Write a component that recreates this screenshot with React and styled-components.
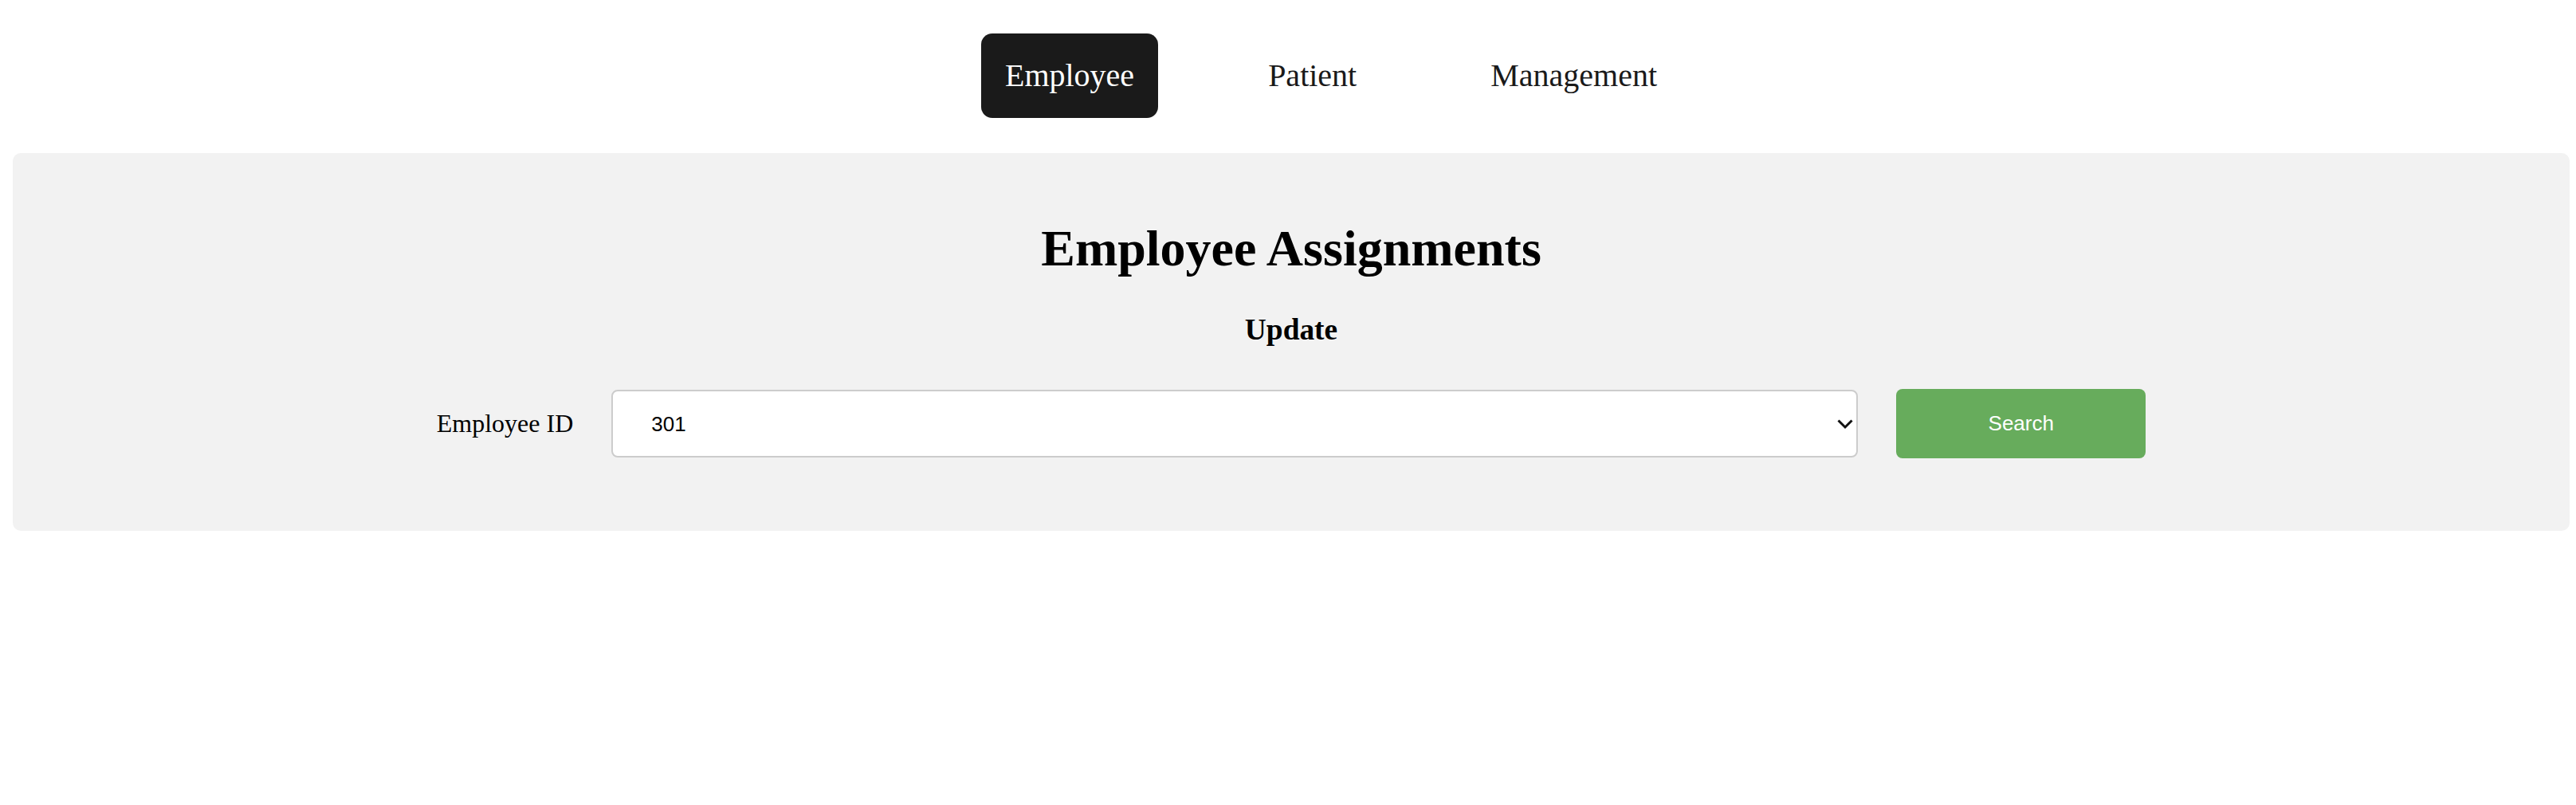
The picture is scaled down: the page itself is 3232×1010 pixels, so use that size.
import React, {useState} from 'react';
import styled, {createGlobalStyle} from 'styled-components';

const GlobalStyle = createGlobalStyle`
    html, body {
        margin: 0;
        padding: 0;
        background: #ffffff;
    }
    body {
        font-family: "Liberation Serif", "Times New Roman", serif;
        color: #000;
    }
`;

const Page = styled.div`
    padding: 16px;
`;

const Nav = styled.nav`
    display: flex;
    justify-content: center;
    align-items: center;
    padding: 26px 0 44px;
`;

const NavLink = styled.a`
    margin-left: 108px;
    padding: 30px;
    border-radius: 14px;
    font-size: 40px;
    line-height: 46px;
    text-decoration: none;
    cursor: pointer;
    color: ${props => (props.$active ? '#ffffff' : '#1a1a1a')};
    background-color: ${props => (props.$active ? '#1a1a1a' : 'transparent')};
`;

const Panel = styled.section`
    margin-right: -8px; // panel runs 8px past the page padding
    background-color: #f2f2f2;
    border-radius: 10px;
    padding: 40px 40px 91px;
    text-align: center;
`;

const Title = styled.h1`
    font-size: 64px;
    line-height: 74px;
    font-weight: bold;
    margin: 43px 0;
`;

const SubTitle = styled.h3`
    font-size: 37.4px;
    line-height: 43px;
    font-weight: bold;
    margin: 0 0 53px;
`;

const Row = styled.form`
    display: flex;
    justify-content: center;
    align-items: center;
    gap: 48px;
`;

const Label = styled.label`
    font-size: 32px;
    line-height: 37px;
    white-space: nowrap;
`;

const SelectWrap = styled.div`
    position: relative;
    width: 1564px;
    height: 85px;
`;

const Select = styled.select`
    appearance: none;
    width: 100%;
    height: 100%;
    box-sizing: border-box;
    padding: 0 48px;
    border: 2px solid #cccccc;
    border-radius: 8px;
    background-color: #ffffff;
    font-family: "Liberation Sans", Arial, sans-serif;
    font-size: 26px;
    color: #000;
    outline: none;
`;

const Chevron = styled.svg`
    position: absolute;
    right: 4px;
    top: 50%;
    transform: translateY(-50%);
    pointer-events: none;
`;

const SearchButton = styled.button`
    width: 313px;
    height: 87px;
    border: none;
    border-radius: 8px;
    background-color: #67ac5c;
    color: #ffffff;
    font-family: "Liberation Sans", Arial, sans-serif;
    font-size: 26px;
    cursor: pointer;
`;

const tabs = ['Employee', 'Patient', 'Management'];

const App = () => {
    const [active, setActive] = useState('Employee');
    const [employeeId, setEmployeeId] = useState('301');

    return (
        <Page>
            <GlobalStyle />
            <Nav>
                {tabs.map(tab => (
                    <NavLink
                        key={tab}
                        $active={tab === active}
                        onClick={() => setActive(tab)}
                    >
                        {tab}
                    </NavLink>
                ))}
            </Nav>
            <Panel>
                <Title>Employee Assignments</Title>
                <SubTitle>Update</SubTitle>
                <Row onSubmit={(e) => e.preventDefault()}>
                    <Label htmlFor="employeeId">Employee ID</Label>
                    <SelectWrap>
                        <Select
                            id="employeeId"
                            value={employeeId}
                            onChange={(e) => setEmployeeId(e.target.value)}
                        >
                            <option value="301">301</option>
                            <option value="302">302</option>
                            <option value="303">303</option>
                        </Select>
                        <Chevron width="24" height="14" viewBox="0 0 24 14">
                            <polyline
                                points="3.5,2.5 12,11 20.5,2.5"
                                fill="none"
                                stroke="#111"
                                strokeWidth="3"
                            />
                        </Chevron>
                    </SelectWrap>
                    <SearchButton type="submit">Search</SearchButton>
                </Row>
            </Panel>
        </Page>
    );
};

export default App;
